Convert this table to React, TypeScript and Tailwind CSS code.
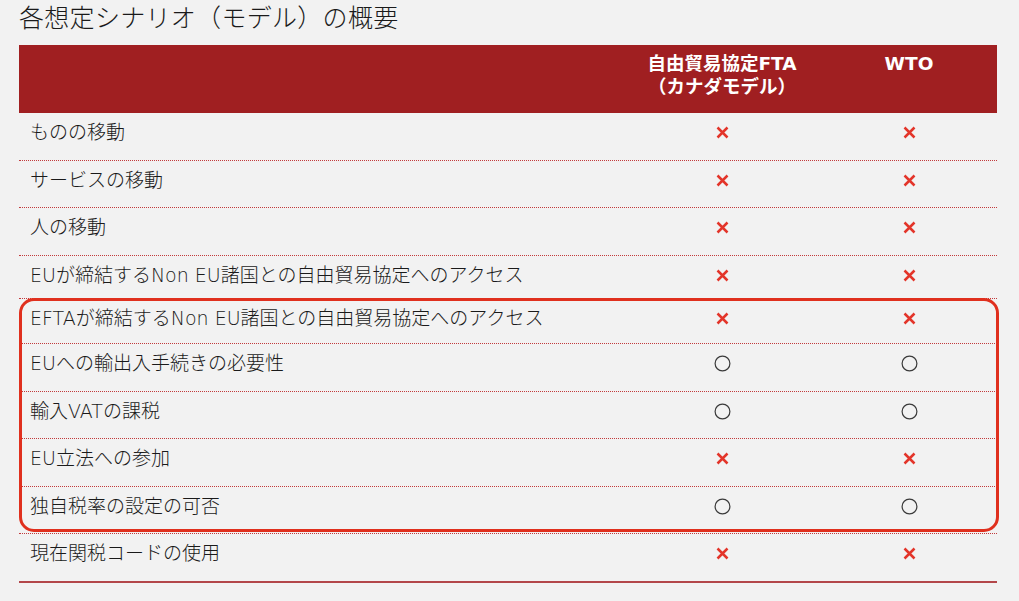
import React from "react";

type Mark = "x" | "o";

const rows: { label: string; a: Mark; b: Mark; h: string }[] = [
  { label: "ものの移動", a: "x", b: "x", h: "h-[48px]" },
  { label: "サービスの移動", a: "x", b: "x", h: "h-[47px]" },
  { label: "人の移動", a: "x", b: "x", h: "h-[48px]" },
  { label: "EUが締結するNon EU諸国との自由貿易協定へのアクセス", a: "x", b: "x", h: "h-[43px]" },
  { label: "EFTAが締結するNon EU諸国との自由貿易協定へのアクセス", a: "x", b: "x", h: "h-[45px]" },
  { label: "EUへの輸出入手続きの必要性", a: "o", b: "o", h: "h-[48px]" },
  { label: "輸入VATの課税", a: "o", b: "o", h: "h-[47px]" },
  { label: "EU立法への参加", a: "x", b: "x", h: "h-[48px]" },
  { label: "独自税率の設定の可否", a: "o", b: "o", h: "h-[47px]" },
];

function Cross() {
  return (
    <svg width="13" height="13" viewBox="0 0 13 13">
      <path d="M1.5 1.5 L11.5 11.5 M11.5 1.5 L1.5 11.5" stroke="#e3352a" strokeWidth="2.5" strokeLinecap="butt" />
    </svg>
  );
}

function Circle() {
  return (
    <svg width="17" height="17" viewBox="0 0 17 17">
      <circle cx="8.5" cy="8.5" r="7.4" fill="none" stroke="#3a3a3a" strokeWidth="1.2" />
    </svg>
  );
}

function MarkCell({ m, w }: { m: Mark; w: string }) {
  return <div className={`${w} flex items-center justify-center`}>{m === "x" ? <Cross /> : <Circle />}</div>;
}

export default function App() {
  return (
    <div
      className="w-[1019px] h-[601px] bg-[#f2f2f2] overflow-hidden text-[#1a1a1a]"
      style={{ fontFamily: '"DejaVu Sans", "Noto Sans CJK JP", sans-serif' }}
    >
      <div className="h-[45px] pl-[19px]">
        <h1
          className="text-[25px] leading-[32px] font-light tracking-[0.3px]"
          style={{ fontFamily: '"Noto Sans CJK JP", sans-serif' }}
        >
          各想定シナリオ（モデル）の概要
        </h1>
      </div>
      <div className="relative ml-[19px] w-[978px]">
        <div className="h-[68px] bg-[#a01f21] flex text-white font-bold text-[18.5px] leading-[23px] pt-[7px]">
          <div className="w-[604px]" />
          <div className="w-[198px] text-center">
            <div>自由貿易協定FTA</div>
            <div>（カナダモデル）</div>
          </div>
          <div className="w-[176px] text-center">WTO</div>
        </div>
        {rows.map((r, i) => (
          <div key={i} className={`${r.h} border-b border-dotted border-[#c23a3c] flex items-start`}>
            <div className="h-[38px] w-[604px] flex items-center pl-[11px] text-[19px] font-light">{r.label}</div>
            <div className="h-[38px] flex">
              <MarkCell m={r.a} w="w-[198px]" />
              <MarkCell m={r.b} w="w-[176px]" />
            </div>
          </div>
        ))}
        <div className="h-[49px] border-b-2 border-[#b3474a] flex items-start">
          <div className="h-[38px] w-[604px] flex items-center pl-[11px] text-[19px] font-light">現在関税コードの使用</div>
          <div className="h-[38px] flex">
            <MarkCell m="x" w="w-[198px]" />
            <MarkCell m="x" w="w-[176px]" />
          </div>
        </div>
        <div className="absolute left-0 top-[252.5px] w-[980px] h-[234px] border-[3px] border-[#e0301e] rounded-[15px] pointer-events-none" />
      </div>
    </div>
  );
}
